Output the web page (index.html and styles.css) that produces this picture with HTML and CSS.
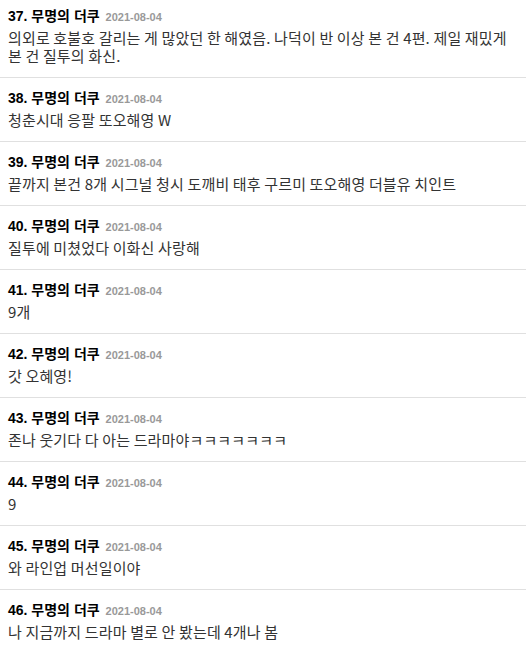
FILE: index.html
```html
<!DOCTYPE html>
<html>
<head>
	<meta charset="utf-8">
	<title>댓글</title>
	<link rel="stylesheet" href="styles.css">
</head>
<body>
	<ul class="comment-list">
		<li class="comment">
			<div class="comment-head">37. 무명의 더쿠 <span class="comment-date">2021-08-04</span></div>
			<div class="comment-text">의외로 호불호 갈리는 게 많았던 한 해였음. 나덕이 반 이상 본 건 4편. 제일 재밌게 본 건 질투의 화신.</div>
		</li>
		<li class="comment">
			<div class="comment-head">38. 무명의 더쿠 <span class="comment-date">2021-08-04</span></div>
			<div class="comment-text">청춘시대 응팔 또오해영 W</div>
		</li>
		<li class="comment">
			<div class="comment-head">39. 무명의 더쿠 <span class="comment-date">2021-08-04</span></div>
			<div class="comment-text">끝까지 본건 8개 시그널 청시 도깨비 태후 구르미 또오해영 더블유 치인트</div>
		</li>
		<li class="comment">
			<div class="comment-head">40. 무명의 더쿠 <span class="comment-date">2021-08-04</span></div>
			<div class="comment-text">질투에 미쳤었다 이화신 사랑해</div>
		</li>
		<li class="comment">
			<div class="comment-head">41. 무명의 더쿠 <span class="comment-date">2021-08-04</span></div>
			<div class="comment-text">9개</div>
		</li>
		<li class="comment">
			<div class="comment-head">42. 무명의 더쿠 <span class="comment-date">2021-08-04</span></div>
			<div class="comment-text">갓 오혜영!</div>
		</li>
		<li class="comment">
			<div class="comment-head">43. 무명의 더쿠 <span class="comment-date">2021-08-04</span></div>
			<div class="comment-text">존나 웃기다 다 아는 드라마야ㅋㅋㅋㅋㅋㅋㅋ</div>
		</li>
		<li class="comment">
			<div class="comment-head">44. 무명의 더쿠 <span class="comment-date">2021-08-04</span></div>
			<div class="comment-text">9</div>
		</li>
		<li class="comment">
			<div class="comment-head">45. 무명의 더쿠 <span class="comment-date">2021-08-04</span></div>
			<div class="comment-text">와 라인업 머선일이야</div>
		</li>
		<li class="comment">
			<div class="comment-head">46. 무명의 더쿠 <span class="comment-date">2021-08-04</span></div>
			<div class="comment-text">나 지금까지 드라마 별로 안 봤는데 4개나 봄</div>
		</li>
	</ul>
</body>
</html>
```

FILE: styles.css
```css
body {
	margin: 0;
	background: #fff;
	font-family: "Noto Sans CJK KR", "Liberation Sans", sans-serif;
	color: #333;
}

.comment-list {
	list-style: none;
	padding: 0;
	margin: -4px 0 0;
}

.comment {
	padding: 10px 14px 12px 8px;
	border-bottom: 1px solid #e0e0e0;
}

.comment-head {
	font-family: "Liberation Sans", "Noto Sans CJK KR", sans-serif;
	font-size: 14px;
	font-weight: bold;
	line-height: 20px;
	color: #000;
}

.comment-date {
	margin-left: 2px;
	font-size: 11px;
	color: #999;
}

.comment-text {
	margin-top: 2px;
	font-size: 15px;
	line-height: 18px;
	letter-spacing: 0.15px;
	color: #333;
}
```
